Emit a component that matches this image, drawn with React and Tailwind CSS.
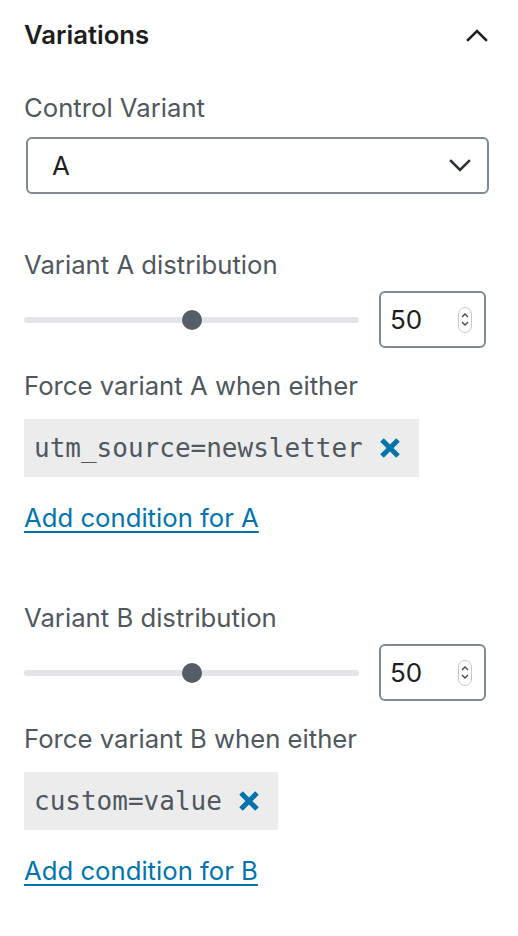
import React from "react";

function Chevron({ up }) {
    return (
        <svg width="22" height="14" viewBox="0 0 22 14" fill="none">
            <path
                d={up ? "M2 12 L11 3 L20 12" : "M2 2 L11 11 L20 2"}
                stroke={up ? "#1e1e1e" : "#2c3338"}
                strokeWidth="2.6"
                strokeLinecap="square"
            />
        </svg>
    );
}

function Spinner() {
    return (
        <div className="w-[14px] h-[26px] rounded-full border border-[#c8c8c8] flex flex-col items-center justify-center gap-[3px] bg-white">
            <svg width="8" height="5" viewBox="0 0 8 5"><path d="M1 4 L4 1 L7 4" stroke="#444" strokeWidth="1.3" fill="none" /></svg>
            <svg width="8" height="5" viewBox="0 0 8 5"><path d="M1 1 L4 4 L7 1" stroke="#444" strokeWidth="1.3" fill="none" /></svg>
        </div>
    );
}

function VariantBlock({ name, condition }) {
    return (
        <div>
            <div className="text-[25.7px] leading-[30px] text-[#50575e]">Variant {name} distribution</div>
            <div className="mt-[11px] flex items-center gap-[20px] pr-[8px]">
                <div className="flex-1 relative h-[6px] rounded-full bg-[#e2e4e7]">
                    <div className="absolute left-[50%] top-1/2 -translate-x-1/2 -translate-y-1/2 w-[20px] h-[20px] rounded-full bg-[#555d66]" />
                </div>
                <div className="w-[107px] h-[57px] border-2 border-[#7e8993] rounded-[6px] flex items-center justify-between pl-[9px] pr-[12px]">
                    <span className="text-[26px] text-[#1e1e1e]">50</span>
                    <Spinner />
                </div>
            </div>
            <div className="mt-[23px] text-[25.7px] leading-[30px] text-[#50575e]">Force variant {name} when either</div>
            <div className="mt-[18px] inline-flex items-center h-[58px] bg-[#ececec] pl-[10px] pr-[18px] gap-[16px]">
                <span className="text-[26px] text-[#50575e]" style={{ fontFamily: '"DejaVu Sans Mono", "Liberation Mono", monospace' }}>{condition}</span>
                <svg width="22" height="22" viewBox="0 0 22 22">
                    <path d="M3 3 L19 19 M19 3 L3 19" stroke="#0073aa" strokeWidth="5" />
                </svg>
            </div>
            <div className="mt-[26px]">
                <a className="text-[25.7px] leading-[30px] text-[#0073aa] underline underline-offset-[4px] decoration-2">Add condition for {name}</a>
            </div>
        </div>
    );
}

export default function App() {
    return (
        <div className="w-[518px] min-h-[936px] bg-white px-[24px] pt-[20px]" style={{ fontFamily: 'Inter, "Noto Sans", sans-serif' }}>
            <div className="flex items-center justify-between h-[30px] pr-[6px]">
                <h2 className="text-[25.7px] font-semibold text-[#1e1e1e]">Variations</h2>
                <Chevron up />
            </div>
            <div className="mt-[43px] text-[25.7px] leading-[30px] text-[#50575e]">Control Variant</div>
            <div className="mt-[14px] ml-[2px] w-[463px] h-[57px] border-2 border-[#7e8993] rounded-[6px] flex items-center justify-between pl-[24px] pr-[16px]">
                <span className="text-[26px] text-[#1e1e1e]">A</span>
                <Chevron />
            </div>
            <div className="mt-[56px]">
                <VariantBlock name="A" condition="utm_source=newsletter" />
            </div>
            <div className="mt-[70px]">
                <VariantBlock name="B" condition="custom=value" />
            </div>
        </div>
    );
}
